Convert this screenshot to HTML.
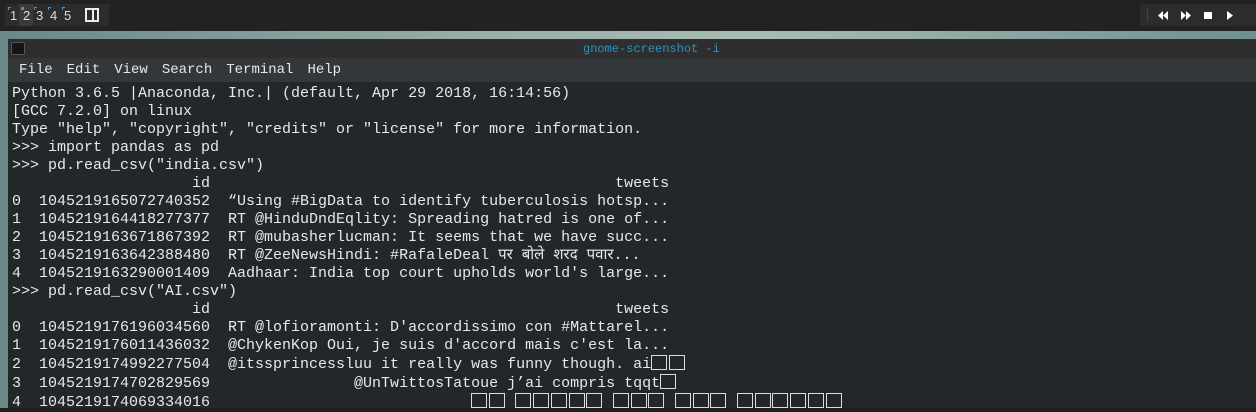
<!DOCTYPE html>
<html><head><meta charset="utf-8"><style>
*{margin:0;padding:0;box-sizing:border-box}
body{width:1256px;height:408px;overflow:hidden;background:#1f1f1f;position:relative;font-family:"Liberation Mono",monospace}
#top{position:absolute;left:0;top:0;width:1256px;height:31px;background:#222}
#ws{position:absolute;left:5px;top:4px;width:104px;height:22px;background:#2c2c2c;color:#ddd;font:13px "Liberation Sans",sans-serif}
#ws span{position:absolute;top:4px}
#ws i{position:absolute;top:3px;width:3px;height:3px;border-top:1px solid #2aa0d0;border-left:1px solid #2aa0d0}
#media{position:absolute;left:1140px;top:4px;width:116px;height:22px;background:#2c2c2c}
#strip{position:absolute;left:0;top:31px;width:1256px;height:377px;background:linear-gradient(90deg,#6a8888,#9ab0aa 40%,#a9bcb4 60%,#6e9090)}
#win{position:absolute;left:8px;top:39px;width:1248px;height:369px;background:#23272a}
#title{height:19px;background:#2e2e2e;position:relative}
#title .t{position:absolute;left:575px;top:3px;color:#2a93c4;font-size:12px}
#title .ic{position:absolute;left:3px;top:3px;width:14px;height:13px;background:#151515;border:1px solid #555;border-radius:2px}
#menu{height:24px;background:#33373a;color:#e8e8e8;font-size:14px;padding:4px 0 0 11px;word-spacing:0}
#menu span{margin-right:14px}
pre{font-family:"Liberation Mono",monospace;font-size:15px;line-height:18px;color:#e8e8e8;padding:3px 0 0 4px}
b.x{display:inline-block;width:16px;height:15px;border:1px solid #ddd;vertical-align:-2px;margin-right:1.7px;font-weight:normal}
</style></head><body>
<div id="top"></div>
<div id="ws">
<i style="left:3px"></i><span style="left:5px">1</span>
<div style="position:absolute;left:14px;top:0;width:14px;height:22px;background:#3a3a3a"></div>
<i style="left:16px;background:#2aa0d0"></i><span style="left:18px">2</span>
<i style="left:29px"></i><span style="left:31px">3</span>
<i style="left:43px"></i><span style="left:45px">4</span>
<i style="left:57px"></i><span style="left:59px">5</span>
<div style="position:absolute;left:80px;top:4px;width:14px;height:14px;border:2px solid #eee"></div>
<div style="position:absolute;left:87px;top:4px;width:2px;height:14px;background:#eee"></div>
</div>
<div id="media">
<div style="position:absolute;left:7px;top:4px;width:1px;height:14px;background:#444"></div>
<svg style="position:absolute;left:18px;top:7px" width="80" height="9" viewBox="0 0 80 9" fill="#fff">
<path d="M0 4.5 5 0v9zM5 4.5 10 0v9z"/><path d="M23 0l5 4.5-5 4.5zM28 0l5 4.5-5 4.5z"/><rect x="46" y="1" width="8" height="7"/><path d="M69 0l6 4.5-6 4.5z"/></svg>
</div>
<div id="strip"></div>
<div id="win">
<div id="title"><div class="ic"></div><span class="t">gnome-screenshot -i</span></div>
<div id="menu"><span>File</span><span>Edit</span><span>View</span><span>Search</span><span>Terminal</span><span>Help</span></div>
<pre>Python 3.6.5 |Anaconda, Inc.| (default, Apr 29 2018, 16:14:56)
[GCC 7.2.0] on linux
Type "help", "copyright", "credits" or "license" for more information.
&gt;&gt;&gt; import pandas as pd
&gt;&gt;&gt; pd.read_csv("india.csv")
                    id                                             tweets
0  1045219165072740352  “Using #BigData to identify tuberculosis hotsp...
1  1045219164418277377  RT @HinduDndEqlity: Spreading hatred is one of...
2  1045219163671867392  RT @mubasherlucman: It seems that we have succ...
3  1045219163642388480  RT @ZeeNewsHindi: #RafaleDeal पर बोले शरद पवार...
4  1045219163290001409  Aadhaar: India top court upholds world's large...
&gt;&gt;&gt; pd.read_csv("AI.csv")
                    id                                             tweets
0  1045219176196034560  RT @lofioramonti: D'accordissimo con #Mattarel...
1  1045219176011436032  @ChykenKop Oui, je suis d'accord mais c'est la...
2  1045219174992277504  @itssprincessluu it really was funny though. ai<b class="x"></b><b class="x"></b>
3  1045219174702829569                @UnTwittosTatoue j’ai compris tqqt<b class="x"></b>
4  1045219174069334016                             <b class="x"></b><b class="x"></b> <b class="x"></b><b class="x"></b><b class="x"></b><b class="x"></b><b class="x"></b> <b class="x"></b><b class="x"></b><b class="x"></b> <b class="x"></b><b class="x"></b><b class="x"></b> <b class="x"></b><b class="x"></b><b class="x"></b><b class="x"></b><b class="x"></b><b class="x"></b></pre>
</div>
</body></html>
